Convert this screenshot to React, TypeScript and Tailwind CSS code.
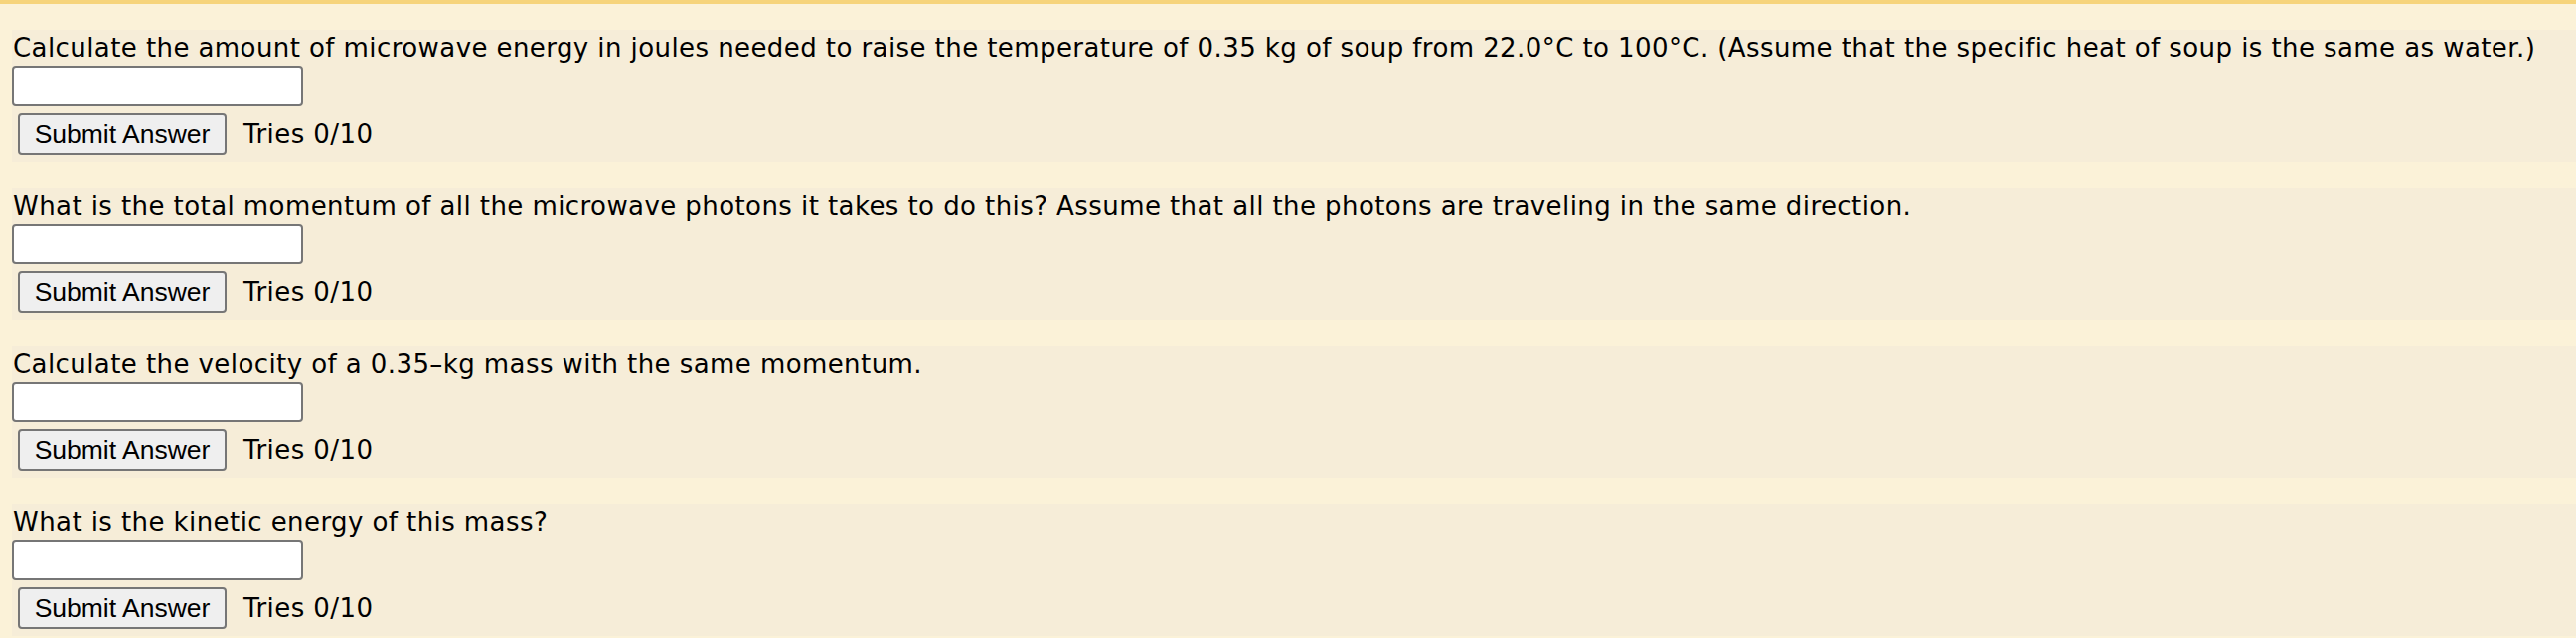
import React from "react";

const questions = [
  "Calculate the amount of microwave energy in joules needed to raise the temperature of 0.35 kg of soup from 22.0°C to 100°C. (Assume that the specific heat of soup is the same as water.)",
  "What is the total momentum of all the microwave photons it takes to do this? Assume that all the photons are traveling in the same direction.",
  "Calculate the velocity of a 0.35–kg mass with the same momentum.",
  "What is the kinetic energy of this mass?",
];

export default function App() {
  return (
    <div className="w-[2592px] h-[642px] overflow-hidden bg-[#fbf2d8] border-t-4 border-[#f6d47b] text-black">
      <div className="flex flex-col gap-[26px] pt-[26px] pl-[12px]">
        {questions.map((q, i) => (
          <div key={i} className="bg-[#f6edd8] pb-[7px]">
            <div className="pl-[1px] h-[34px] text-[26px] leading-[36px] tracking-[0.42px] font-['DejaVu_Sans',Verdana,sans-serif] whitespace-nowrap">
              {q}
            </div>
            <input
              type="text"
              className="block mt-[2px] w-[293px] h-[41px] bg-white border-2 border-[#767676] rounded-[4px] outline-none"
            />
            <div className="flex items-center mt-[7px]">
              <button className="ml-[6px] w-[210px] h-[42px] bg-[#efefef] border-2 border-[#767676] rounded-[4px] text-[26.5px] leading-none font-['Liberation_Sans',Arial,sans-serif] text-black">
                Submit Answer
              </button>
              <span className="ml-[17px] text-[26px] leading-none tracking-[0.42px] font-['DejaVu_Sans',Verdana,sans-serif]">
                Tries 0/10
              </span>
            </div>
          </div>
        ))}
      </div>
    </div>
  );
}
